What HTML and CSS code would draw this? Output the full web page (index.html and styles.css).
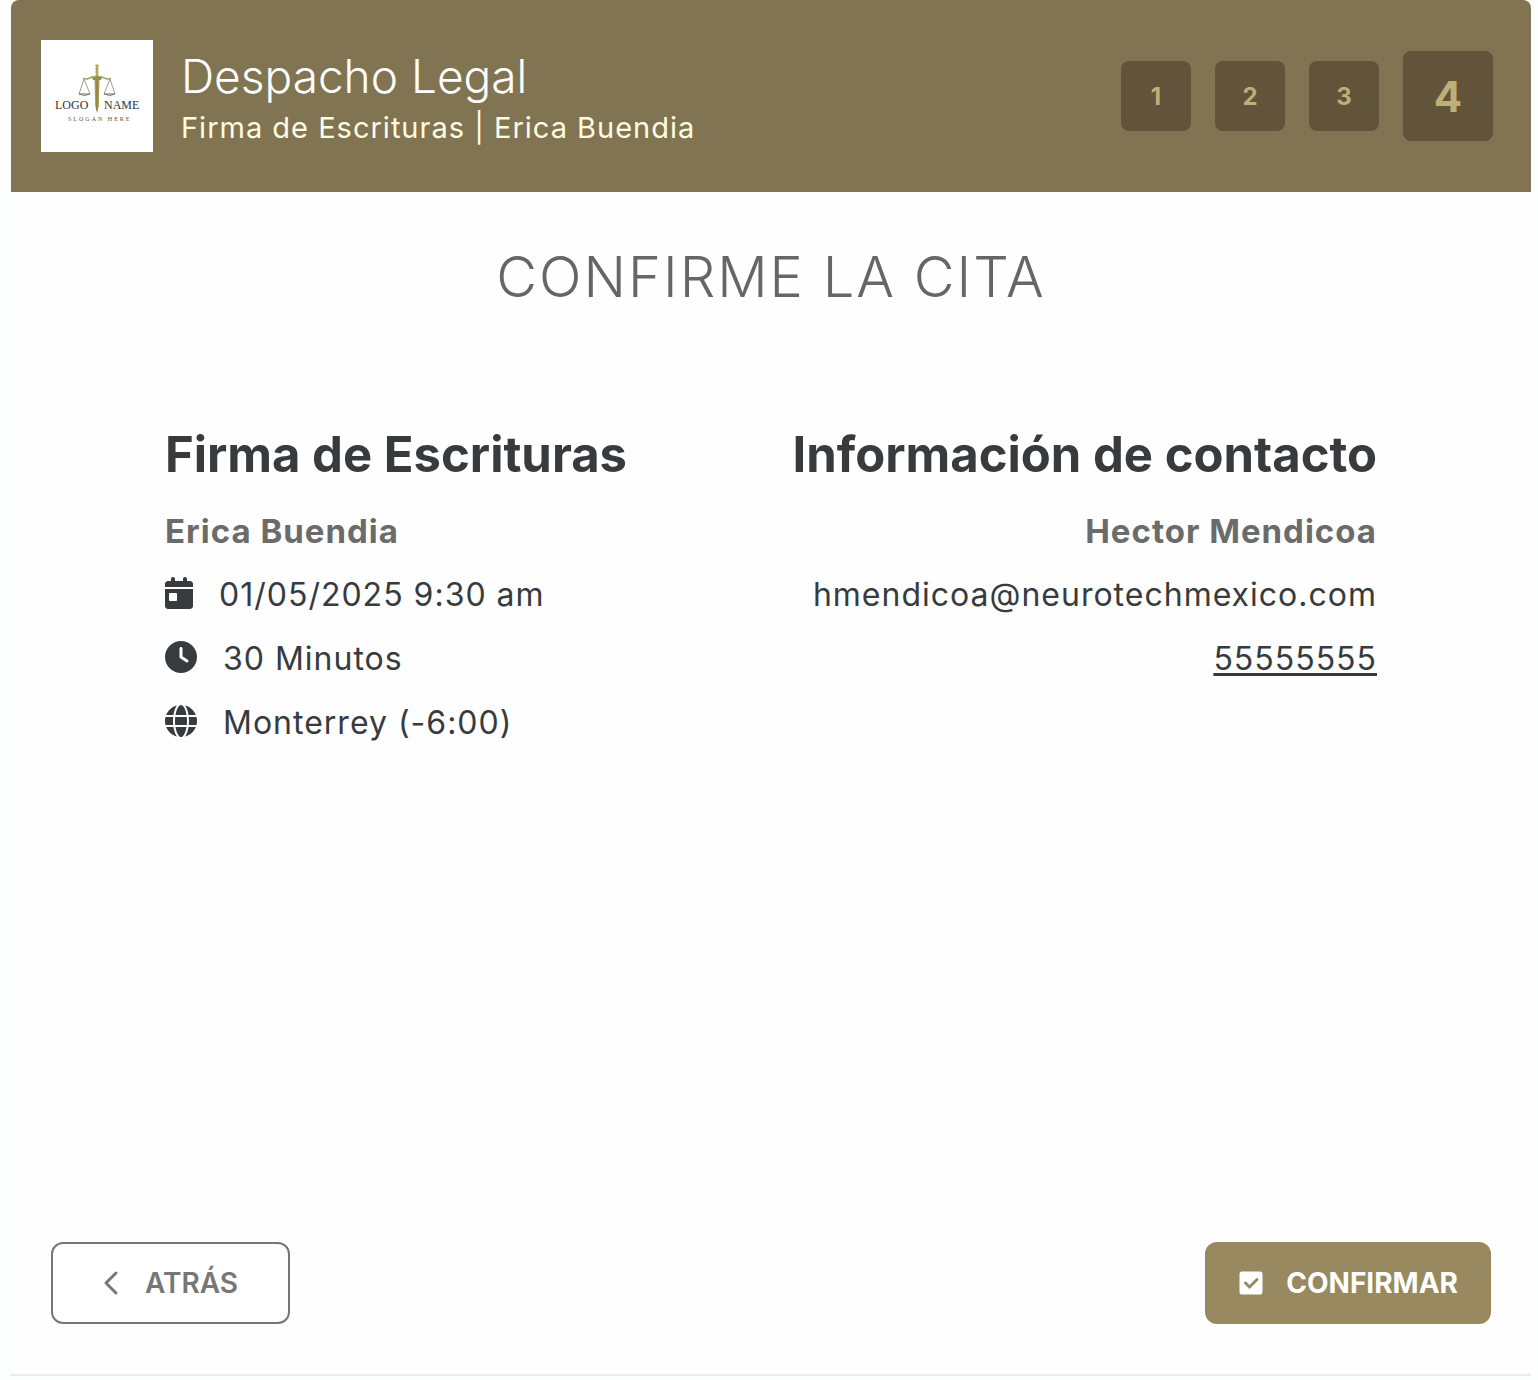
FILE: index.html
```html
<!DOCTYPE html>
<html lang="es">
<head>
<meta charset="utf-8">
<meta name="viewport" content="width=device-width, initial-scale=1">
<title>Despacho Legal</title>
<link rel="stylesheet" href="styles.css">
</head>
<body>
<div class="card">
  <header class="header">
    <svg class="logo" viewBox="0 0 112 112" role="img" aria-label="Logo Name">
      <rect width="112" height="112" fill="#fff"/>
      <g fill="none" stroke="#a39a58" stroke-width="1">
        <path d="M54 38C50 34 48 42 42 38M58 38C62 34 64 42 70 38" stroke-width="1.4"/>
        <path d="M43 39L38 54M43 39L49 54M69 39L63 54M69 39L74 54" stroke="#77745f" stroke-width=".7"/>
        <path d="M38 54Q43.500 57 49 54ZM63 54Q68.500 57 74 54Z" stroke="#77745f"/>
      </g>
      <circle cx="56" cy="26" r="1.800" fill="#b5a85c"/>
      <path d="M55 27h2v10h-2z" fill="#b5a85c"/>
      <path d="M54 29h4M54 32h4M54 35h4" stroke="#b5a85c"/>
      <path d="M51 37q5-2 10 0l-1 3h-8z" fill="#97904f"/>
      <path d="M53.500 40h5l-.7 26-1.800 7-1.800-7z" fill="#aa9c50"/>
      <path d="M56 40v31" stroke="#776d3c" stroke-width=".8"/>
      <text class="logo-name" x="14" y="69">LOGO</text>
      <text class="logo-name" x="63" y="69">NAME</text>
      <text class="logo-slogan" x="27" y="81">SLOGAN HERE</text>
    </svg>
    <div class="brand">
      <h1 class="brand-title">Despacho Legal</h1>
      <p class="brand-subtitle">Firma de Escrituras | Erica Buendia</p>
    </div>
    <ol class="steps">
      <li class="step">1</li>
      <li class="step">2</li>
      <li class="step">3</li>
      <li class="step step-current" aria-current="step">4</li>
    </ol>
  </header>

  <main class="content">
    <h2 class="page-title">CONFIRME LA CITA</h2>
    <div class="details">
      <section class="details-column">
        <h3 class="details-title">Firma de Escrituras</h3>
        <p class="details-name">Erica Buendia</p>
        <p class="row">
          <svg class="icon icon-calendar" viewBox="0 0 448 512" aria-hidden="true"><path d="M96 32v32H48C21.500 64 0 85.500 0 112v48h448v-48c0-26.500-21.500-48-48-48h-48V32c0-17.700-14.300-32-32-32s-32 14.300-32 32v32H160V32c0-17.700-14.300-32-32-32S96 14.300 96 32zM448 192H0v272c0 26.500 21.500 48 48 48h352c26.500 0 48-21.500 48-48V192zM80 256h96c8.800 0 16 7.200 16 16v96c0 8.800-7.200 16-16 16H80c-8.800 0-16-7.200-16-16v-96c0-8.800 7.200-16 16-16z"/></svg>
          01/05/2025 9:30 am
        </p>
        <p class="row">
          <svg class="icon" viewBox="0 0 512 512" aria-hidden="true"><path d="M256 0a256 256 0 1 1 0 512A256 256 0 1 1 256 0zM232 120v136c0 8 4 15.500 10.700 20l96 64c11 7.400 25.900 4.400 33.300-6.700s4.400-25.900-6.700-33.300L280 243.200V120c0-13.300-10.700-24-24-24s-24 10.700-24 24z"/></svg>
          30 Minutos
        </p>
        <p class="row">
          <svg class="icon" viewBox="0 0 512 512" aria-hidden="true"><path d="M352 256c0 22.200-1.200 43.600-3.300 64H163.300c-2.200-20.400-3.300-41.800-3.300-64s1.200-43.600 3.300-64h185.400c2.200 20.400 3.300 41.800 3.300 64zm28.800-64h123.100c5.300 20.500 8.100 41.900 8.100 64s-2.800 43.500-8.100 64H380.800c2.100-20.600 3.200-42 3.200-64s-1.100-43.400-3.200-64zm112.600-32H376.700c-10-63.900-29.800-117.400-55.300-151.600 78.300 20.700 142 77.500 171.900 151.600zm-149.100 0H167.700c6.100-36.400 15.500-68.600 27-94.700 10.500-23.600 22.200-40.700 33.500-51.500C239.400 3.200 248.700 0 256 0s16.600 3.200 27.800 13.800c11.300 10.800 23 27.900 33.500 51.500 11.600 26 20.900 58.200 27 94.700zm-209 0H18.600C48.600 85.900 112.200 29.100 190.600 8.400 165.100 42.600 145.300 96.100 135.300 160zM8.100 192h123.100c-2.100 20.600-3.200 42-3.200 64s1.100 43.400 3.200 64H8.100C2.800 299.500 0 278.100 0 256s2.800-43.500 8.100-64zm186.600 254.600c-11.600-26-20.900-58.200-27-94.600h176.600c-6.100 36.400-15.500 68.600-27 94.600-10.500 23.600-22.200 40.700-33.500 51.500C272.600 508.800 263.300 512 256 512s-16.600-3.200-27.800-13.800c-11.300-10.800-23-27.900-33.500-51.600zM135.300 352c10 63.900 29.800 117.400 55.300 151.600C112.200 482.900 48.600 426.100 18.600 352h116.700zm358.100 0c-30 74.100-93.600 130.900-171.900 151.600 25.500-34.200 45.200-87.700 55.300-151.600h116.600z"/></svg>
          Monterrey (-6:00)
        </p>
      </section>
      <section class="details-column details-contact">
        <h3 class="details-title">Información de contacto</h3>
        <p class="details-name">Hector Mendicoa</p>
        <p class="row">hmendicoa@neurotechmexico.com</p>
        <p class="row"><a class="phone" href="tel:55555555">55555555</a></p>
      </section>
    </div>
  </main>

  <footer class="actions">
    <button class="button button-back" type="button">
      <svg class="icon-chevron" viewBox="0 0 16 28" aria-hidden="true"><path d="M13 4L3 14l10 10"/></svg>
      ATRÁS
    </button>
    <button class="button button-confirm" type="button">
      <svg class="icon-check" viewBox="0 0 26 26" aria-hidden="true"><rect width="26" height="26" rx="4" fill="#fff"/><path d="M7.500 13l4 4 7.500-7.500"/></svg>
      CONFIRMAR
    </button>
  </footer>
</div>
</body>
</html>
```
FILE: styles.css
```css
* {
  box-sizing: border-box;
}

body {
  display: flex;
  min-height: 100vh;
  margin: 0;
  padding: 0 7px 4px 11px;
  background: #fdfefe;
  color: #373b3e;
  font-family: Inter, "Liberation Sans", sans-serif;
}

h1, h2, h3, p, ol {
  margin: 0;
  padding: 0;
}

.card {
  display: flex;
  flex: 1;
  flex-direction: column;
  border-bottom: 2px solid #ececec;
  border-radius: 8px 8px 0 0;
  background: #fefefe;
  overflow: hidden;
}

.header {
  display: flex;
  align-items: center;
  padding: 40px 38px 40px 30px;
  background: #817453;
}

.logo {
  width: 112px;
  height: 112px;
  margin-right: 28px;
}

.logo-name {
  fill: #333;
  font: 12px "Liberation Serif", serif;
}

.logo-slogan {
  fill: #555;
  font: 6px "Liberation Serif", serif;
  letter-spacing: 2px;
}

.brand {
  flex: 1;
  padding-top: 8px;
}

.brand-title {
  color: #fff;
  font-size: 46px;
  font-weight: 300;
  line-height: 56px;
}

.brand-subtitle {
  color: #fffce0;
  font-size: 29px;
  font-weight: 400;
  line-height: 48px;
  letter-spacing: 1px;
}

.steps {
  display: flex;
  align-items: center;
  gap: 24px;
  list-style: none;
}

.step {
  display: grid;
  place-items: center;
  width: 70px;
  height: 70px;
  border-radius: 8px;
  background: #61543a;
  color: #bfae78;
  font-size: 24px;
  font-weight: 700;
}

.step-current {
  width: 90px;
  height: 90px;
  font-size: 42px;
}

.content {
  flex: 1;
  padding: 49px 154px;
}

.page-title {
  color: #666;
  font-size: 56px;
  font-weight: 300;
  line-height: 72px;
  letter-spacing: 2px;
  text-align: center;
}

.details {
  display: flex;
  justify-content: space-between;
  margin-top: 112px;
}

.details-contact {
  text-align: right;
}

.details-title {
  font-size: 49px;
  font-weight: 700;
  line-height: 60px;
}

.details-name {
  margin-top: 14px;
  color: #6b6b6b;
  font-size: 33px;
  font-weight: 700;
  line-height: 64px;
  letter-spacing: 1px;
}

.row {
  font-size: 32px;
  line-height: 64px;
  letter-spacing: 1px;
}

.icon {
  width: 32px;
  height: 32px;
  margin-right: 16px;
  fill: #373b3e;
  vertical-align: -3px;
}

.icon-calendar {
  width: 28px;
}

.phone {
  color: inherit;
  text-decoration-thickness: 3px;
  text-underline-offset: 3px;
}

.actions {
  display: flex;
  justify-content: space-between;
  padding: 0 40px 50px;
}

.button {
  display: flex;
  align-items: center;
  justify-content: center;
  height: 82px;
  border: 2px solid #777;
  border-radius: 12px;
  font-family: inherit;
  font-size: 28px;
  font-weight: 600;
}

.button-back {
  gap: 26px;
  padding: 0 50px;
  background: #fff;
  color: #777;
}

.button-confirm {
  gap: 22px;
  padding: 0 31px;
  border-color: #988960;
  background: #988960;
  color: #fff;
  font-weight: 700;
}

.icon-chevron {
  width: 16px;
  height: 28px;
  fill: none;
  stroke: #777;
  stroke-width: 3;
  stroke-linecap: round;
  stroke-linejoin: round;
}

.icon-check {
  width: 26px;
  height: 26px;
  fill: none;
  stroke: #988960;
  stroke-width: 3;
  stroke-linecap: round;
}
```
